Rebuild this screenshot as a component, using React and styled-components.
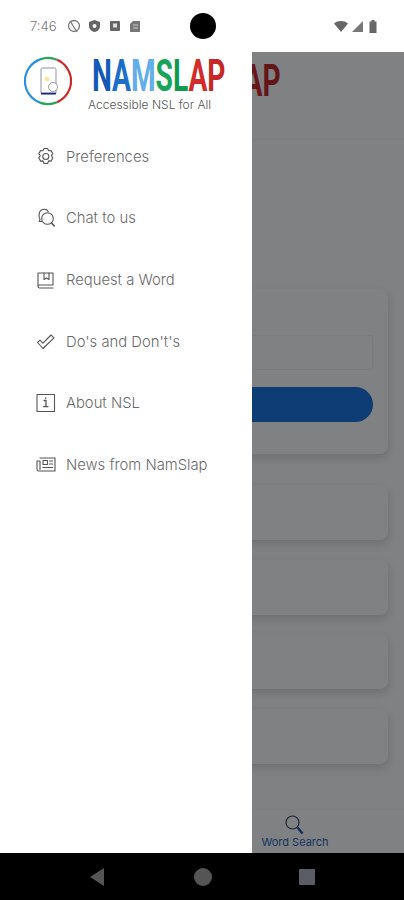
import React from 'react';
import styled, { createGlobalStyle } from 'styled-components';

const GlobalStyle = createGlobalStyle`
  html, body { margin: 0; padding: 0; background: #fff; }
  body { font-family: "Inter", "Liberation Sans", sans-serif; }
  * { box-sizing: border-box; }
`;

const Screen = styled.div`
  width: 404px;
  height: 900px;
  display: flex;
  flex-direction: column;
  overflow: hidden;
  background: #fff;
`;

// status bar
const StatusBar = styled.div`
  height: 52px;
  flex: none;
  display: grid;
  grid-template-columns: 1fr 26px 1fr;
  align-items: center;
  padding: 0 27px 0 29px;
`;
const StatusLeft = styled.div`
  display: flex;
  align-items: center;
  gap: 7px;
  color: #777;
`;
const Clock = styled.span`
  font-size: 13px;
  font-weight: 300;
  width: 27px;
  margin-left: 1px;
  margin-right: 3px;
  white-space: nowrap;
`;
const Camera = styled.div`
  width: 26px;
  height: 26px;
  border-radius: 50%;
  background: #000;
`;
const StatusRight = styled.div`
  display: flex;
  justify-content: flex-end;
  align-items: center;
  gap: 3px;
`;

// the app lying behind the drawer
const Body = styled.div`
  position: relative;
  flex: 1;
  min-height: 0;
  display: flex;
  flex-direction: column;
  background: #fefefe;
`;
const AppHeader = styled.div`
  height: 88px;
  flex: none;
  border-bottom: 1px solid #f2f2f2;
  padding: 9px 0 0 228px;
`;
const AppContent = styled.div`
  flex: 1;
  padding: 149px 16px 0 16px;
  display: flex;
  flex-direction: column;
  gap: 19.5px;
`;
const SearchCard = styled.div`
  height: 165px;
  margin-bottom: 11.5px;
  padding: 46px 15px 0;
  border-radius: 8px;
  background: #fff;
  box-shadow: 1px 4px 8px rgba(0, 0, 0, 0.14);
  display: flex;
  flex-direction: column;
  gap: 17px;
`;
const SearchInput = styled.div`
  height: 35px;
  border: 1px solid #f3f3f3;
  border-radius: 3px;
`;
const SearchButton = styled.div`
  height: 35px;
  border-radius: 18px;
  background: #1a76e0;
`;
const ResultCard = styled.div`
  height: 55px;
  border-radius: 8px;
  background: #fff;
  box-shadow: 1px 4px 8px rgba(0, 0, 0, 0.14);
`;
const TabBar = styled.div`
  height: 44px;
  flex: none;
  padding: 5px 75px 0 0;
  border-top: 1px solid #f6f6f6;
  display: flex;
  justify-content: flex-end;
`;
const Tab = styled.div`
  width: 68px;
  display: flex;
  flex-direction: column;
  align-items: center;
  color: #2a65b8;
  font-size: 11px;
  line-height: 13px;
  font-weight: 400;
  white-space: nowrap;
`;

const Scrim = styled.div`
  position: absolute;
  inset: 0;
  background: rgba(0, 4, 8, 0.5);
`;

// drawer
const Drawer = styled.div`
  position: absolute;
  top: 0;
  bottom: 0;
  left: 0;
  width: 252px;
  background: #fff;
  display: flex;
  flex-direction: column;
`;
const DrawerHeader = styled.div`
  height: 74px;
  flex: none;
  display: flex;
  padding: 4px 0 0 24px;
`;
const LogoBox = styled.div`
  width: 48px;
  height: 50px;
  flex: none;
`;
const Brand = styled.div`
  margin-left: 16px;
  display: flex;
  flex-direction: column;
  align-items: flex-start;
`;
const Word = styled.div`
  width: 124px;
  height: 40px;
  margin-left: ${p => p.$inset}px;
  font-family: "Roboto", "Liberation Sans", sans-serif;
  font-weight: 700;
  font-size: 45px;
  line-height: 40px;
  white-space: nowrap;
  transform: scaleX(0.625);
  transform-origin: left center;
`;
const Letter = styled.span`
  color: ${p => p.$color};
`;
const Tagline = styled.div`
  margin-top: 2px;
  font-family: "Inter", "Liberation Sans", sans-serif;
  font-size: 12px;
  font-weight: 300;
  line-height: 14px;
  color: #555;
  white-space: nowrap;
`;
const Menu = styled.div`
  display: flex;
  flex-direction: column;
`;
const MenuRow = styled.div`
  height: 61.6px;
  display: flex;
  align-items: center;
  padding-left: 36px;
`;
const MenuIcon = styled.span`
  width: 30px;
  height: 20px;
  flex: none;
  display: flex;
  align-items: center;
  color: #555;
`;
const MenuLabel = styled.span`
  font-size: 14.8px;
  font-weight: 300;
  color: #6a6a6a;
  white-space: nowrap;
`;

// nav bar
const NavBar = styled.div`
  height: 47px;
  flex: none;
  background: #000;
  display: flex;
  align-items: center;
  justify-content: space-between;
  padding: 0 89px;
`;

const LETTERS = [
  ['N', '#1359b8'],
  ['A', '#1b6fca'],
  ['M', '#62aee8'],
  ['S', '#1aa35a'],
  ['L', '#0e9a4c'],
  ['A', '#d32a2a'],
  ['P', '#c62828'],
];

const Wordmark = ({ inset = 4, from = 0 }) => (
  <Word $inset={inset}>
    {LETTERS.slice(from).map(([ch, color], i) => <Letter key={i} $color={color}>{ch}</Letter>)}
  </Word>
);

const Svg = ({ w = 20, h = 20, children }) => (
  <svg width={w} height={h} viewBox={`0 0 ${w} ${h}`} fill="none" stroke="currentColor" strokeWidth="1.1" strokeLinecap="round" strokeLinejoin="round">
    {children}
  </svg>
);

const GearIcon = () => (
  <Svg>
    <path d="M8 1.5h3.6l1 2.2 2.4-.2 1.8 3.1-1.4 2 1.4 2.4-1.8 3.1-2.4-.2-1 2.6H8l-1-2.6-2.4.2-1.8-3.1 1.4-2.4-1.4-2 1.8-3.1 2.4.2z" />
    <circle cx="9.8" cy="9.5" r="3" />
  </Svg>
);
const ChatIcon = () => (
  <Svg>
    <path d="M6 13.5H3.2l.8-2C2.6 9 2.6 4 5 2.2c2.4-1.6 6-1 7.2 1.2" />
    <circle cx="11.5" cy="10.5" r="5.8" />
    <path d="M15.5 15l2.8 3" strokeWidth="1.6" />
  </Svg>
);
const BookIcon = () => (
  <Svg>
    <path d="M2 16V3h15v12H3.500A1.600 1.600 0 0 0 2 16.600 1.600 1.600 0 0 0 3.500 18H17" />
    <path d="M8 3v6.500l2.500-1.500L13 9.500V3" />
  </Svg>
);
const CheckIcon = () => (
  <Svg h={18}>
    <path d="M1.500 9.500l2.500-2.400 3 3L15 2l3 2.800L7 15.500z" />
  </Svg>
);
const InfoIcon = () => (
  <Svg>
    <rect x="1" y="1.500" width="17.500" height="17" />
    <path d="M8 7.500h2v6M7.600 13.600h4.400M9.800 4.800v.6" strokeWidth="1.300" />
  </Svg>
);
const NewsIcon = () => (
  <Svg h={18}>
    <path d="M4 2h15v13H2.500A1.500 1.500 0 0 1 1 13.500V5h3v8.500" />
    <rect x="7" y="4.500" width="4.500" height="4" />
    <path d="M13.500 5h3M13.500 8h3M7 11.500h9.500" />
  </Svg>
);

const LogoRing = () => (
  <svg width="48" height="50" viewBox="0 0 48 50" fill="none">
    <g strokeWidth="2.200" fill="none">
      <path d="M16 3.400A23 23 0 0 0 16 46.600" stroke="#2b8fe0" />
      <path d="M16 3.400A23 23 0 0 1 33 3.800" stroke="#27a35a" />
      <path d="M33 3.800A23 23 0 0 1 33 46.200" stroke="#cf2a2a" />
      <path d="M16 46.600A23 23 0 0 0 33 46.200" stroke="#27a35a" />
    </g>
    <rect x="17" y="12" width="15" height="26" rx="1.500" stroke="#8d93a8" strokeWidth="1" />
    <path d="M17 37.500h15" stroke="#1a2a80" strokeWidth="1.800" />
    <circle cx="23" cy="23" r="2.500" fill="#f3e9a4" />
    <circle cx="29" cy="31" r="4.500" fill="#fff" stroke="#9aa0a8" strokeWidth="1" />
  </svg>
);

const StatusGlyphs = () => (
  <>
    <svg width="14" height="16" viewBox="0 0 14 16" fill="none" stroke="#777" strokeWidth="1.300">
      <circle cx="7" cy="8" r="5.500" />
      <path d="M3 3l7 11" />
    </svg>
    <svg width="13" height="14" viewBox="0 0 13 14">
      <path d="M6.500 1l5.500 2v4c0 3-2.500 5.500-5.500 6C3.500 12.500 1 10 1 7V3z" fill="#666" />
      <circle cx="6.500" cy="7" r="2" fill="#fff" />
    </svg>
    <svg width="14" height="12" viewBox="0 0 14 12">
      <rect x="2" y="1" width="10" height="10" rx="1" fill="#666" />
      <rect x="5" y="3.500" width="4" height="4" fill="#ddd" />
    </svg>
    <svg width="12" height="13" viewBox="0 0 12 13">
      <path d="M4 1h7v11H1V4z" fill="#777" />
      <path d="M4 5h5M4 8h5" stroke="#ccc" strokeWidth="1" />
    </svg>
  </>
);

const SearchGlyph = () => (
  <svg width="20" height="21" viewBox="0 0 20 21" fill="none" stroke="#40495e" strokeWidth="1.200">
    <circle cx="7.500" cy="7.500" r="6.500" />
    <path d="M12.500 12.500l5 6" stroke="#1e5ab0" strokeWidth="2.400" />
  </svg>
);

const MENU = [
  ['Preferences', GearIcon],
  ['Chat to us', ChatIcon],
  ['Request a Word', BookIcon],
  ["Do's and Don't's", CheckIcon],
  ['About NSL', InfoIcon],
  ['News from NamSlap', NewsIcon],
];

export default function App() {
  return (
    <Screen>
      <GlobalStyle />
      <StatusBar>
        <StatusLeft>
          <Clock>7:46</Clock>
          <StatusGlyphs />
        </StatusLeft>
        <Camera />
        <StatusRight>
          <svg width="14" height="11" viewBox="0 0 14 11"><path d="M0 2.500C3.500-.8 10.500-.8 14 2.500L7 11z" fill="#666" /></svg>
          <svg width="12" height="11" viewBox="0 0 12 11"><path d="M12 0v11H1z" fill="#777" /></svg>
          <svg width="8" height="13" viewBox="0 0 8 13" style={{ marginLeft: 3 }}><path d="M2.500 0h3v1.500H7.500V13H.5V1.500h2z" fill="#666" /></svg>
        </StatusRight>
      </StatusBar>

      <Body>
        <AppHeader>
          <Wordmark inset={0} from={4} />
        </AppHeader>
        <AppContent>
          <SearchCard>
            <SearchInput />
            <SearchButton />
          </SearchCard>
          <ResultCard />
          <ResultCard />
          <ResultCard />
          <ResultCard />
        </AppContent>
        <TabBar>
          <Tab>
            <SearchGlyph />
            Word Search
          </Tab>
        </TabBar>
        <Scrim />
        <Drawer>
          <DrawerHeader>
            <LogoBox><LogoRing /></LogoBox>
            <Brand>
              <Wordmark />
              <Tagline>Accessible NSL for All</Tagline>
            </Brand>
          </DrawerHeader>
          <Menu>
            {MENU.map(([label, Icon]) => (
              <MenuRow key={label}>
                <MenuIcon><Icon /></MenuIcon>
                <MenuLabel>{label}</MenuLabel>
              </MenuRow>
            ))}
          </Menu>
        </Drawer>
      </Body>

      <NavBar>
        <svg width="18" height="18" viewBox="0 0 18 18"><path d="M15 0v18L1 9z" fill="#555" /></svg>
        <svg width="18" height="18" viewBox="0 0 18 18"><circle cx="9" cy="9" r="9" fill="#555" /></svg>
        <svg width="16" height="16" viewBox="0 0 16 16"><rect width="16" height="16" rx="1" fill="#5a5c66" /></svg>
      </NavBar>
    </Screen>
  );
}
